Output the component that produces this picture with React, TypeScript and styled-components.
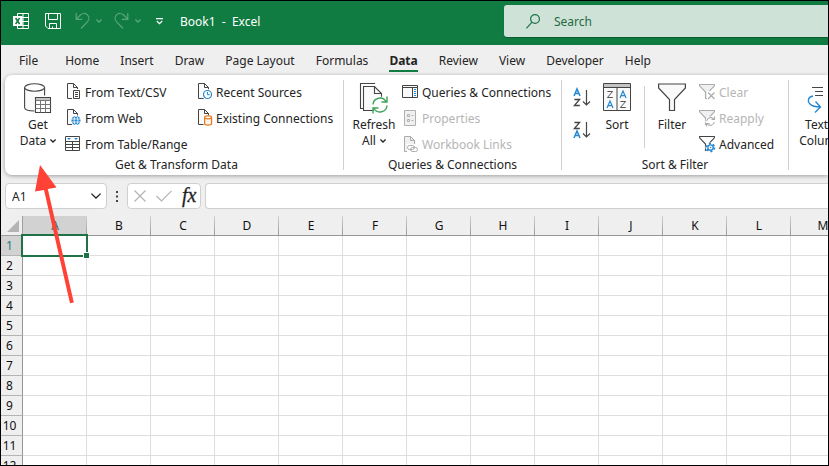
import React from 'react';
import styled, { createGlobalStyle, css } from 'styled-components';

const GlobalStyle = createGlobalStyle`
  *, *::before, *::after { box-sizing: border-box; }
  body { margin: 0; background: #efefef; }
  body, button, input { font-family: "Noto Sans", "Open Sans", sans-serif; font-size: 12px; color: #242424; }
  button { border: 0; padding: 0; background: none; }
  svg { display: block; flex: none; overflow: visible; }
`;

const Window = styled.div`
  position: relative;
  display: flex;
  flex-direction: column;
  height: 100vh;
  border: 1px solid #000;
  overflow: hidden;
  background: #efefef;
`;

/* Title bar */
const TitleBar = styled.header`
  display: flex;
  flex: none;
  height: 44px;
  background: #107c41;
  color: #fff;
`;
const QuickAccess = styled.div`
  display: flex;
  align-items: center;
  flex: 0 0 503px;
  height: 40px;
  padding-left: 12px;
`;
const QuickButton = styled.button<{ $gap: number }>`
  margin-left: ${(p) => p.$gap}px;
  color: #fff;
  &:disabled { color: #58a67b; }
`;
const DocTitle = styled.h1`
  margin: 0 0 0 17px;
  font-size: 12px;
  font-weight: 400;
  white-space: pre;
`;
const SearchBox = styled.label`
  display: flex;
  align-items: center;
  flex: 1;
  height: 32px;
  margin-top: 4px;
  padding-left: 22px;
  gap: 14px;
  border-radius: 3px 0 0 3px;
  background: #cfe2d7;
  color: #1e7145;
  box-shadow: 0 1px 1px #0b5c30;
`;
const SearchInput = styled.input`
  flex: 1;
  min-width: 0;
  padding: 0;
  border: 0;
  outline: 0;
  background: transparent;
  &::placeholder { color: #1e6b42; opacity: 1; }
`;

/* Tabs */
const TabBar = styled.nav`
  display: flex;
  align-items: center;
  flex: none;
  gap: 1px;
  height: 30px;
  padding-left: 8px;
`;
const Tab = styled.button<{ $active?: boolean; $wide?: boolean }>`
  position: relative;
  height: 30px;
  padding: 0 10px;
  margin-right: ${(p) => (p.$wide ? 6 : 0)}px;
  white-space: nowrap;
  ${(p) =>
    p.$active &&
    css`
      font-weight: 700;
      &::after {
        content: '';
        position: absolute;
        left: 10px;
        right: 10px;
        bottom: 3px;
        height: 2px;
        background: #107c41;
      }
    `}
`;

/* Ribbon */
const Ribbon = styled.div`
  display: flex;
  flex: none;
  margin-left: 4px;
  padding: 5px 0 5px 5px;
  border-radius: 7px 0 0 7px;
  background: #fff;
  box-shadow: 0 1px 4px rgba(0, 0, 0, 0.35);
`;
const Group = styled.section<{ $width: number }>`
  display: flex;
  flex-direction: column;
  flex: 0 0 ${(p) => p.$width}px;
  height: 90px;
  border-right: 1px solid #d0d0d0;
`;
const GroupBody = styled.div<{ $inset: number }>`
  display: flex;
  height: 76px;
  padding-left: ${(p) => p.$inset}px;
`;
const GroupLabel = styled.h2`
  margin: 2px 0 0;
  font-size: 12px;
  font-weight: 400;
  line-height: 14px;
  text-align: center;
`;
const BigButton = styled.button<{ $width: number }>`
  display: flex;
  flex-direction: column;
  align-items: center;
  flex: 0 0 ${(p) => p.$width}px;
  padding-top: 3px;
  line-height: 16px;
  white-space: nowrap;
`;
const BigIcon = styled.span`
  display: flex;
  height: 34px;
`;
const MenuLine = styled.span`
  display: flex;
  align-items: center;
  gap: 4px;
`;
const Stack = styled.div<{ $width?: number }>`
  display: flex;
  flex-direction: column;
  gap: 2px;
  flex: 0 0 ${(p) => (p.$width ? p.$width + 'px' : 'auto')};
`;
const SmallButton = styled.button`
  display: flex;
  align-items: center;
  height: 24px;
  gap: 4px;
  white-space: nowrap;
  &:disabled { color: #b5b5b5; }
`;
const SortStack = styled.div`
  display: flex;
  flex-direction: column;
  gap: 12px;
  flex: 0 0 25px;
  padding-top: 9px;
`;
const Divider = styled.i`
  flex: 0 0 1px;
  height: 62px;
  margin-top: 6px;
  background: #d0d0d0;
`;

/* Formula bar */
const FormulaBar = styled.div`
  display: flex;
  flex: none;
  height: 26px;
  margin: 8px 0 7px 4px;
`;
const field = css`
  display: flex;
  align-items: center;
  min-width: 0;
  border: 1px solid #d0d0d0;
  border-radius: 4px;
  background: #fff;
`;
const NameBox = styled.div`
  ${field}
  flex: 0 0 102px;
  padding: 0 5px 0 6px;
`;
const NameInput = styled.input`
  flex: 1;
  width: 0;
  min-width: 0;
  padding: 0;
  border: 0;
  outline: 0;
`;
const Dots = styled.div`
  display: flex;
  align-items: center;
  justify-content: center;
  flex: 0 0 20px;
`;
const FormulaActions = styled.div`
  ${field}
  flex: 0 0 74px;
  padding-left: 6px;
  gap: 10px;
`;
const FxButton = styled.button`
  font: italic 400 20px/20px "Liberation Serif", serif;
  -webkit-text-stroke: 0.3px;
  padding-bottom: 2px;
`;
const FormulaInput = styled.input`
  ${field}
  flex: 1;
  margin-left: 4px;
  border-right: 0;
  border-radius: 4px 0 0 4px;
`;

/* Sheet */
const Grid = styled.table`
  flex: none;
  align-self: flex-start;
  width: 854px;
  table-layout: fixed;
  border-collapse: separate;
  border-spacing: 0;
  background: #fff;
`;
const Corner = styled.th`
  width: 22px;
  height: 20px;
  padding: 0;
  border-right: 1px solid #a0a0a0;
  border-bottom: 1px solid #a0a0a0;
  background: #efefef;
  svg { margin-left: 6px; }
`;
const ColHead = styled.th<{ $selected?: boolean }>`
  width: 64px;
  padding: 0;
  border-bottom: 1px solid #969696;
  background:
    linear-gradient(#d0d0d0, #9a9a9a) right / 1px 100% no-repeat,
    ${(p) => (p.$selected ? '#d2d2d2' : '#efefef')};
  color: ${(p) => (p.$selected ? '#1b6f5c' : '#111')};
  font-weight: 400;
  line-height: 19px;
`;
const RowHead = styled.th<{ $selected?: boolean }>`
  height: 20px;
  padding: 0 4px 0 0;
  border-right: 1px solid #969696;
  border-bottom: 1px solid #b4b4b4;
  background: ${(p) => (p.$selected ? '#d2d2d2' : '#efefef')};
  color: ${(p) => (p.$selected ? '#1b7f6c' : '#111')};
  font-weight: 400;
  line-height: 19px;
`;
const Cell = styled.td`
  position: relative;
  padding: 0;
  border-right: 1px solid #dedede;
  border-bottom: 1px solid #dedede;
`;
const Selection = styled.div`
  position: absolute;
  z-index: 1;
  inset: -2px;
  border: 2px solid #1f7246;
  &::after {
    content: '';
    position: absolute;
    right: -4px;
    bottom: -4px;
    width: 7px;
    height: 7px;
    border: 1px solid #fff;
    background: #1f7246;
  }
`;
const Pointer = styled.svg`
  position: absolute;
  z-index: 2;
  left: 34px;
  top: 163px;
`;

const D = '#444';
const B = '#2488d0';

const Chevron = ({ w = 6 }: { w?: number }) => (
  <svg width={w} height={w / 2 + 1} viewBox={`0 0 ${w} ${w / 2 + 1}`} fill="none" stroke="currentColor" strokeWidth="1.3">
    <path d={`M.4 .6L${w / 2} ${w / 2}L${w - 0.4} .6`} />
  </svg>
);

const ExcelLogo = () => (
  <svg width="16" height="16" viewBox="0 0 16 16">
    <path d="M4.5 .5h11v15h-11zM4.5 4.5h11M4.5 8.5h11M4.5 12.5h11M10 .5v15" fill="none" stroke="#fff" />
    <path d="M0 3h9.500v10H0z" fill="#fff" />
    <path d="M2.600 5l4 6M6.600 5l-4 6" stroke="#107c41" strokeWidth="1.500" />
  </svg>
);
const SaveIcon = () => (
  <svg width="16" height="16" viewBox="0 0 16 16" fill="none" stroke="currentColor">
    <path d="M.5 .5h15v15H3L.5 13zM3.500 .5v6h9v-6M4.500 15.500v-5h7v5M7.500 15.500v-2" />
  </svg>
);
const UndoIcon = ({ flip = false }: { flip?: boolean }) => (
  <svg width="15" height="16" viewBox="0 0 15 16" fill="none" stroke="currentColor" strokeWidth="1.200">
    <g transform={flip ? 'translate(15 0) scale(-1 1)' : undefined}>
      <path d="M1.200 0v6.400h6M1.200 6.200L5.400 2C7.500 0 10.600 0 12.400 1.800c2 2 2 5 0 7L6 15.500" />
    </g>
  </svg>
);
const CustomizeIcon = () => (
  <svg width="7" height="7" viewBox="0 0 7 7" fill="none" stroke="currentColor" strokeWidth="1.200">
    <path d="M0 .6h7M.8 3l2.700 2.700L6.200 3" />
  </svg>
);
const SearchIcon = () => (
  <svg width="14" height="15" viewBox="0 0 14 15" fill="none" stroke="currentColor" strokeWidth="1.200">
    <circle cx="9" cy="5" r="4.400" />
    <path d="M5.800 8.400L.4 14.300" />
  </svg>
);

const PagePath = ({ c = D }: { c?: string }) => (
  <>
    <path d="M1.500 .5h6l4 4v11h-10z" fill="#fafafa" stroke={c} />
    <path d="M7.500 .5v4h4" fill="none" stroke={c} />
  </>
);
const small = { width: 16, height: 18, viewBox: '0 0 16 18', fill: 'none' };
const page = { ...small, viewBox: '-1 0 16 18' };

const TextCsvIcon = () => (
  <svg {...page}>
    <PagePath />
    <path d="M6 6h9v11H6z" fill="#fff" />
    <path d="M7.500 7.500h6v8h-6z" fill="#fff" stroke={D} />
    <path d="M9 9.500h3M9 11.500h3M9 13.500h3" stroke={D} />
  </svg>
);
const WebIcon = () => (
  <svg {...page}>
    <PagePath />
    <circle cx="10" cy="11.500" r="5.500" fill="#fff" />
    <circle cx="10" cy="11.500" r="4.500" fill={B} />
    <ellipse cx="10" cy="11.500" rx="1.900" ry="4.300" stroke="#fff" strokeWidth=".8" />
    <path d="M6 10h8M6 13h8" stroke="#fff" strokeWidth=".8" />
  </svg>
);
const TableRangeIcon = () => (
  <svg {...small}>
    <path d="M.5 1.500h14v14H.5z" fill="#fff" stroke={D} />
    <path d="M2 3h4L4 5zM9 3h4L11 5z" fill={B} />
    <path d="M.5 6.500h14M7.500 6.500v9" stroke={D} />
    <path d="M.5 9.500h14M.5 12.500h14" stroke={D} />
  </svg>
);
const RecentIcon = () => (
  <svg {...page}>
    <PagePath />
    <circle cx="10.500" cy="11.500" r="5.500" fill="#fff" />
    <circle cx="10.500" cy="11.500" r="4" fill="#fff" stroke={B} strokeWidth="1.200" />
    <path d="M10.500 9v2.700h2.300" stroke={B} />
  </svg>
);
const ExistingIcon = () => (
  <svg {...page}>
    <PagePath />
    <path d="M6.500 6.500h9v10h-9z" fill="#fff" />
    <path d="M7.600 8.300v6.400c0 1.800 7 1.800 7 0V8.300" fill="#fdf3ea" stroke="#e8761a" strokeWidth="1.200" />
    <ellipse cx="11.100" cy="8.300" rx="3.500" ry="1.500" fill="#fff" stroke="#e8761a" strokeWidth="1.200" />
  </svg>
);
const QueriesIcon = () => (
  <svg {...small}>
    <path d="M.5 2.500h15v12H.5z" fill="#fafafa" stroke={D} />
    <path d="M0 4.500h16M10.500 4.500v10" stroke={D} />
    <path d="M12 6.500h2M12 8.500h2M12 10.500h2M12 12.500h2" stroke={B} strokeWidth="1.200" />
  </svg>
);
const PropertiesIcon = () => (
  <svg {...small} stroke="#b0b0b0">
    <path d="M2.500 1.500h11v15h-11z" fill="#f0f0f0" />
    <path d="M5.500 5.500h2v2h-2zM5.500 10.500h2v2h-2zM9.500 6.500h2M9.500 11.500h2" />
  </svg>
);
const LinksIcon = () => (
  <svg {...small} stroke="#ababab">
    <g transform="translate(1 1)">
      <path d="M1.500 .5h6l4 4v11h-10z" fill="#f0f0f0" />
      <path d="M7.500 .5v4h4" />
    </g>
    <rect x="5" y="9" width="11" height="9" fill="#fff" stroke="none" />
    <rect x="5.500" y="10.500" width="7" height="4" rx="2" />
    <rect x="8.500" y="12.500" width="7" height="4" rx="2" />
  </svg>
);
const SmallFunnel = ({ c, f }: { c: string; f: string }) => (
  <path d="M.6 1.500h14.800v1.300L9.500 9v6.500h-3V9L.6 2.800z" fill={f} stroke={c} strokeWidth="1.100" />
);
const ClearIcon = () => (
  <svg {...small}>
    <SmallFunnel c="#ababab" f="#f0f0f0" />
    <path d="M8 8h8v9H8z" fill="#fff" />
    <path d="M9 9.500l6.500 6.500M15.500 9.500L9 16" stroke="#ababab" strokeWidth="1.200" />
  </svg>
);
const ReapplyIcon = () => (
  <svg {...small}>
    <SmallFunnel c="#ababab" f="#f0f0f0" />
    <circle cx="11.500" cy="12.500" r="5" fill="#fff" />
    <path d="M7.700 12a4 4 0 0 1 7.200-1.700M15.500 7.500v3h-3M15.300 13a4 4 0 0 1-7.200 1.700M7.500 17.500v-3h3" stroke="#ababab" strokeWidth="1.100" />
  </svg>
);
const AdvancedIcon = () => (
  <svg {...small}>
    <SmallFunnel c={D} f="#fff" />
    <circle cx="11.500" cy="12.500" r="5" fill="#fff" />
    <circle cx="11.500" cy="12.500" r="2.700" stroke={B} strokeWidth="1.300" />
    <circle cx="11.500" cy="12.500" r="3.900" stroke={B} strokeWidth="1.700" strokeDasharray="2.100 1.980" />
    <circle cx="11.500" cy="12.500" r=".8" fill={B} />
  </svg>
);

const DatabaseIcon = () => (
  <svg width="28" height="32" viewBox="0 0 28 32" fill="none" stroke={D} strokeWidth="1.100">
    <path d="M.6 4.500v20c0 2.300 4.500 3.500 10 3.500s10-1.200 10-3.500v-20" fill="#fafafa" />
    <ellipse cx="10.600" cy="4.500" rx="10" ry="3.700" fill="#fff" />
    <path d="M10.500 12.500H28V31H10.500z" fill="#fff" stroke="none" />
    <path d="M11.500 14.500h15v15h-15z" fill="#fff" />
    <path d="M12 15h14v2.500H12z" fill="#c4c4c4" stroke="none" />
    <path d="M11.500 17.500h15M11.500 21.500h15M11.500 25.500h15M16.500 17.500v12M21.500 17.500v12" stroke="#777" strokeWidth="1" />
  </svg>
);
const RefreshIcon = () => (
  <svg width="30" height="32" viewBox="0 0 30 32" fill="none" stroke={D} strokeWidth="1.100">
    <path d="M16 .5H1.500v25h3" />
    <path d="M4.500 3.500h11l7 7v17h-18z" fill="#fafafa" />
    <path d="M15.500 3.500v7h7" />
    <circle cx="21" cy="22" r="8.500" fill="#fff" stroke="none" />
    <path d="M14 21.500a7 7 0 0 1 13-3M28 13.500v5.500h-5.500M28 22.500a7 7 0 0 1-13 3M14 30.500V25h5.500" stroke="#3da25a" strokeWidth="1.400" />
  </svg>
);
const A_PATH = 'M0 7L3 0L6 7M1.200 4.600h3.600';
const Z_PATH = 'M.4 .5h5.200L.4 6.500h5.400';
const SortDirIcon = ({ desc = false }: { desc?: boolean }) => (
  <svg width="18" height="20" viewBox="0 0 18 20" fill="none">
    <path d={A_PATH} stroke={B} strokeWidth="1.500" transform={desc ? 'translate(1 10)' : 'translate(1 0)'} />
    <path d={Z_PATH} stroke={D} strokeWidth="1.300" transform={desc ? 'translate(1 1)' : 'translate(1 10)'} />
    <path d="M13.500 1v15M10 12.500l3.500 3.500 3.500-3.500" stroke={D} strokeWidth="1.200" />
  </svg>
);
const SortIcon = () => (
  <svg width="28" height="29" viewBox="0 0 28 29" fill="none">
    <path d="M.5 .5h27v27H.5z" fill="#fafafa" stroke={D} />
    <path d="M1 1h26v3.500H1z" fill="#c4c4c4" />
    <path d="M0 4.500h28M14 4.500v23" stroke={D} />
    <path d={Z_PATH} stroke="#555" transform="translate(4 8)" />
    <path d={A_PATH} stroke={B} strokeWidth="1.200" transform="translate(4 18)" />
    <path d={A_PATH} stroke={B} strokeWidth="1.200" transform="translate(17 8)" />
    <path d={Z_PATH} stroke="#555" transform="translate(17 18)" />
  </svg>
);
const FilterIcon = () => (
  <svg width="28" height="29" viewBox="0 0 28 29" fill="none">
    <path d="M.6 1h26.800v4L16.500 16.500v11h-5v-11L.6 5z" fill="#fafafa" stroke={D} strokeWidth="1.200" />
  </svg>
);
const TextColumnsIcon = () => (
  <svg width="34" height="32" viewBox="0 0 34 32" fill="none">
    <path d="M5 4.500h11M8 8.500h8M8 12.500h8" stroke={D} />
    <path d="M21.500 1h12v26h-12z" stroke="#333" />
    <path d="M6 13C1 14 0 18 3 21c2 2 5 3 10 3M8.500 18.500L13.500 24 8 29.500" stroke={B} strokeWidth="1.400" />
  </svg>
);

const TABS = ['File', 'Home', 'Insert', 'Draw', 'Page Layout', 'Formulas', 'Data', 'Review', 'View', 'Developer', 'Help'];
const COLUMNS = 'ABCDEFGHIJKLM'.split('');
const ROWS = Array.from({ length: 12 }, (_, i) => i + 1);

export default function App() {
  return (
    <>
      <GlobalStyle />
      <Window>
        <TitleBar>
          <QuickAccess>
            <ExcelLogo />
            <QuickButton $gap={16} aria-label="Save"><SaveIcon /></QuickButton>
            <QuickButton $gap={14} aria-label="Undo" disabled><UndoIcon /></QuickButton>
            <QuickButton $gap={6} aria-label="Undo history" disabled><Chevron /></QuickButton>
            <QuickButton $gap={12} aria-label="Redo" disabled><UndoIcon flip /></QuickButton>
            <QuickButton $gap={6} aria-label="Redo history" disabled><Chevron /></QuickButton>
            <QuickButton $gap={15} aria-label="Customize toolbar"><CustomizeIcon /></QuickButton>
            <DocTitle>{'Book1  -  Excel'}</DocTitle>
          </QuickAccess>
          <SearchBox>
            <SearchIcon />
            <SearchInput type="text" placeholder="Search" aria-label="Search" />
          </SearchBox>
        </TitleBar>

        <TabBar>
          {TABS.map((t) => (
            <Tab key={t} $active={t === 'Data'} $wide={t === 'File'}>{t}</Tab>
          ))}
        </TabBar>

        <Ribbon>
          <Group $width={334}>
            <GroupBody $inset={1}>
              <BigButton $width={54}>
                <BigIcon><DatabaseIcon /></BigIcon>
                <span>Get</span>
                <MenuLine>Data <Chevron /></MenuLine>
              </BigButton>
              <Stack $width={131}>
                <SmallButton><TextCsvIcon />From Text/CSV</SmallButton>
                <SmallButton><WebIcon />From Web</SmallButton>
                <SmallButton><TableRangeIcon />From Table/Range</SmallButton>
              </Stack>
              <Stack>
                <SmallButton><RecentIcon />Recent Sources</SmallButton>
                <SmallButton><ExistingIcon />Existing Connections</SmallButton>
              </Stack>
            </GroupBody>
            <GroupLabel>Get &amp; Transform Data</GroupLabel>
          </Group>

          <Group $width={218}>
            <GroupBody $inset={2}>
              <BigButton $width={56}>
                <BigIcon><RefreshIcon /></BigIcon>
                <span>Refresh</span>
                <MenuLine>All <Chevron /></MenuLine>
              </BigButton>
              <Stack>
                <SmallButton><QueriesIcon />Queries &amp; Connections</SmallButton>
                <SmallButton disabled><PropertiesIcon />Properties</SmallButton>
                <SmallButton disabled><LinksIcon />Workbook Links</SmallButton>
              </Stack>
            </GroupBody>
            <GroupLabel>Queries &amp; Connections</GroupLabel>
          </Group>

          <Group $width={227}>
            <GroupBody $inset={11}>
              <SortStack>
                <button aria-label="Sort A to Z"><SortDirIcon /></button>
                <button aria-label="Sort Z to A"><SortDirIcon desc /></button>
              </SortStack>
              <BigButton $width={38}>
                <BigIcon><SortIcon /></BigIcon>
                <span>Sort</span>
              </BigButton>
              <Stack $width={8} />
              <Divider />
              <BigButton $width={54}>
                <BigIcon><FilterIcon /></BigIcon>
                <span>Filter</span>
              </BigButton>
              <Stack>
                <SmallButton disabled><ClearIcon />Clear</SmallButton>
                <SmallButton disabled><ReapplyIcon />Reapply</SmallButton>
                <SmallButton><AdvancedIcon />Advanced</SmallButton>
              </Stack>
            </GroupBody>
            <GroupLabel>Sort &amp; Filter</GroupLabel>
          </Group>

          <GroupBody $inset={9}>
            <BigButton $width={52}>
              <BigIcon><TextColumnsIcon /></BigIcon>
              <span>Text to</span>
              <span>Columns</span>
            </BigButton>
          </GroupBody>
        </Ribbon>

        <FormulaBar>
          <NameBox>
            <NameInput type="text" defaultValue="A1" aria-label="Name box" />
            <button aria-label="Open name list"><Chevron w={10} /></button>
          </NameBox>
          <Dots>
            <svg width="2" height="11" viewBox="0 0 2 11" fill="#444">
              <path d="M0 0h2v2H0zM0 4.500h2v2H0zM0 9h2v2H0z" />
            </svg>
          </Dots>
          <FormulaActions>
            <button aria-label="Cancel">
              <svg width="12" height="12" viewBox="0 0 12 12" stroke="#b4b4b4" strokeWidth="1.200">
                <path d="M.5 .5l11 11M11.500 .5l-11 11" />
              </svg>
            </button>
            <button aria-label="Enter">
              <svg width="16" height="12" viewBox="0 0 16 12" fill="none" stroke="#b4b4b4" strokeWidth="1.200">
                <path d="M.5 6l5 5L15.500 .8" />
              </svg>
            </button>
            <FxButton aria-label="Insert function">fx</FxButton>
          </FormulaActions>
          <FormulaInput type="text" aria-label="Formula" />
        </FormulaBar>

        <Grid>
          <thead>
            <tr>
              <Corner aria-label="Select all">
                <svg width="12" height="12" viewBox="0 0 12 12" fill="#b4b4b4"><path d="M12 0v12H0z" /></svg>
              </Corner>
              {COLUMNS.map((c) => (
                <ColHead key={c} $selected={c === 'A'}>{c}</ColHead>
              ))}
            </tr>
          </thead>
          <tbody>
            {ROWS.map((r) => (
              <tr key={r}>
                <RowHead $selected={r === 1}>{r}</RowHead>
                {COLUMNS.map((c) => (
                  <Cell key={c}>{r === 1 && c === 'A' && <Selection />}</Cell>
                ))}
              </tr>
            ))}
          </tbody>
        </Grid>

        <Pointer width="42" height="142" viewBox="0 0 42 142" aria-hidden="true">
          <path d="M5 1L21.500 23.500L12.800 25L38.800 138.500L35 139.300L9 26L0 27.500z" fill="#ff4136" />
        </Pointer>
      </Window>
    </>
  );
}
